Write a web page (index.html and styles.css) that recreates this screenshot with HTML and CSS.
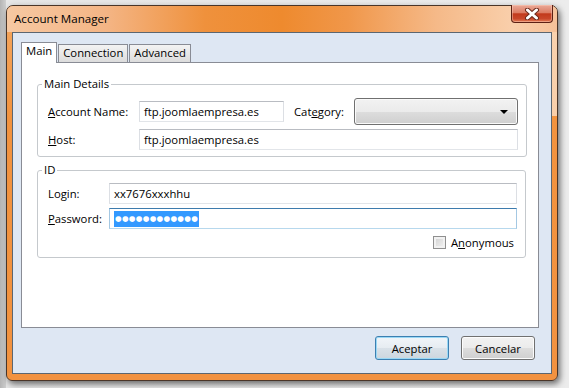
FILE: index.html
```html
<!DOCTYPE html>
<html lang="en">
<head>
    <meta charset="UTF-8">
    <title>Account Manager</title>
    <link rel="stylesheet" href="styles.css">
</head>
<body>
    <div class="desktop">
        <!-- Dialog window -->
        <div class="window">
            <div class="titlebar">
                <span class="title">Account Manager</span>
                <div class="close-btn">
                    <svg width="18" height="12" viewBox="0 0 18 12">
                        <path d="M4.5 2 L13.5 10 M13.5 2 L4.5 10" stroke="#6a2a1c" stroke-width="5" stroke-linecap="round"/>
                        <path d="M4.5 2 L13.5 10 M13.5 2 L4.5 10" stroke="#ffffff" stroke-width="3" stroke-linecap="round"/>
                    </svg>
                </div>
            </div>

            <div class="client">
                <!-- Tabs -->
                <div class="tabs">
                    <div class="tab active">Main</div>
                    <div class="tab">Connection</div>
                    <div class="tab">Advanced</div>
                </div>

                <div class="panel">
                    <fieldset class="group">
                        <legend>Main Details</legend>
                        <div class="rows rows-main">
                            <div class="row row-tall">
                                <span class="lbl lbl-wide"><u>A</u>ccount Name:</span>
                                <div class="field field-account">ftp.joomlaempresa.es</div>
                                <span class="lbl lbl-category">Cat<u>e</u>gory:</span>
                                <div class="combo"><span class="arrow"></span></div>
                            </div>
                            <div class="row">
                                <span class="lbl lbl-wide"><u>H</u>ost:</span>
                                <div class="field field-grow">ftp.joomlaempresa.es</div>
                            </div>
                        </div>
                    </fieldset>

                    <fieldset class="group group-id">
                        <legend>ID</legend>
                        <div class="rows rows-id">
                            <div class="row">
                                <span class="lbl lbl-narrow">Login:</span>
                                <div class="field field-grow">xx7676xxxhhu</div>
                            </div>
                            <div class="row">
                                <span class="lbl lbl-narrow"><u>P</u>assword:</span>
                                <div class="field field-grow field-focus"><span class="selection">●●●●●●●●●●●●</span></div>
                            </div>
                            <div class="row row-check">
                                <span class="checkbox"></span>
                                <span class="check-label">A<u>n</u>onymous</span>
                            </div>
                        </div>
                    </fieldset>
                </div>

                <!-- Dialog buttons -->
                <div class="buttons">
                    <button class="btn btn-default">Aceptar</button>
                    <button class="btn">Cancelar</button>
                </div>
            </div>
        </div>
    </div>
</body>
</html>
```

FILE: styles.css
```css
/* Reset */
* {
    margin: 0;
    padding: 0;
    box-sizing: border-box;
}

body {
    width: 569px;
    height: 388px;
    overflow: hidden;
    font-family: "Open Sans", "Noto Sans", sans-serif;
    font-size: 11.3px;
    color: #000;
}

/* Desktop behind the dialog */
.desktop {
    width: 569px;
    height: 388px;
    padding: 5px 0 0 6px;
    background:
        linear-gradient(90deg, #b4b4b4 0, #cfcfcf 6px, #e6e6e6 6px, #ececec 100%);
}

/* Window frame */
.window {
    width: 552px;
    height: 376px;
    border: 1px solid #4a3528;
    border-radius: 7px 7px 6px 6px;
    background:
        linear-gradient(90deg, transparent 0, transparent 540px, rgba(250, 214, 182, 0.9) 540px),
        linear-gradient(180deg, #f4a862 0%, #f2933f 30%, #f29240 100%);
    background-size: 100% 110px, 100% 100%;
    background-repeat: no-repeat;
    box-shadow: 2px 3px 6px rgba(0, 0, 0, 0.55);
    padding: 0 5px 6px 5px;
    display: flex;
    flex-direction: column;
}

.titlebar {
    height: 26px;
    margin: 0 -5px;
    display: flex;
    justify-content: space-between;
    align-items: flex-start;
    border-radius: 6px 6px 0 0;
    background: linear-gradient(90deg, #f6c8a2 0%, #f4b585 18%, #ef913c 36%, #ee8a2e 50%, #f0974a 62%, #f5b988 78%, #f9cfab 92%, #f6c199 100%);
}

.title {
    padding: 5px 0 0 7px;
    line-height: 16px;
    font-size: 11.6px;
}

.close-btn {
    width: 42px;
    height: 18px;
    margin: -1px 4px 0 0;
    border: 1px solid #5b2014;
    border-top: none;
    border-radius: 0 0 4px 4px;
    background: linear-gradient(180deg, #eaa998 0%, #dc7d64 45%, #c23a1c 52%, #c9472a 80%, #e27d57 100%);
    box-shadow: inset 0 0 0 1px rgba(255, 210, 190, 0.45);
    display: flex;
    justify-content: center;
    align-items: center;
}

/* Client area */
.client {
    flex: 1;
    border: 1px solid #5c6670;
    background: #dee7f3;
    display: flex;
    flex-direction: column;
}

.tabs {
    display: flex;
    align-items: flex-end;
    margin: 9px 0 0 8px;
    height: 20px;
}

.tab {
    height: 18px;
    padding: 0 4px;
    line-height: 15px;
    border: 1px solid #898c95;
    border-bottom: none;
    background: linear-gradient(180deg, #f3f3f3 0%, #e8e8e8 50%, #dcdcdc 100%);
}

.tab + .tab {
    margin-left: 1px;
}

.tab.active {
    height: 21px;
    margin-bottom: -1px;
    background: #fff;
    position: relative;
    z-index: 1;
}

.panel {
    height: 266px;
    margin: 0 12px 0 8px;
    border: 1px solid #898c95;
    background: #fff;
    padding: 13px 12px 0 15px;
}

/* Group boxes */
.group {
    border: 1px solid #c5c9cd;
    border-radius: 3px;
    padding: 0;
}

.group legend {
    margin-left: 4px;
    padding: 0 2px;
    line-height: 16px;
}

.group-id {
    margin-top: 5px;
}

.rows {
    padding: 6px 8px 6px 10px;
}

.rows-id {
    padding-top: 5px;
    padding-bottom: 7px;
}

.row {
    display: flex;
    align-items: center;
}

.row + .row {
    margin-top: 4px;
}

.row-tall {
    height: 27px;
}

.row-check {
    margin-top: 5px !important;
    height: 16px;
    justify-content: flex-end;
}

.lbl {
    flex: none;
}

.lbl-wide {
    width: 91px;
}

.lbl-narrow {
    width: 61px;
}

.lbl-category {
    width: 60px;
    margin-left: 10px;
}

.field {
    height: 21px;
    padding-left: 4px;
    line-height: 19px;
    border: 1px solid;
    border-color: #b9bcc2 #dcdfe4 #e2e5e9 #dcdfe4;
    background: #fff;
    white-space: nowrap;
    overflow: hidden;
}

.field-account {
    width: 145px;
}

.field-grow {
    flex: 1;
}

.field-focus {
    border-color: #3d7bad #a4c8e3 #b7d8ed #a4c8e3;
    display: flex;
    align-items: center;
}

.selection {
    height: 16px;
    padding: 0 1px;
    background: #3399ff;
    color: #fff;
    font-family: "DejaVu Sans", sans-serif;
    font-size: 7.6px;
    line-height: 16px;
    letter-spacing: 0.3px;
}

.combo {
    width: 164px;
    height: 27px;
    border: 1px solid #707070;
    border-radius: 3px;
    background: linear-gradient(180deg, #f2f2f2 0%, #ebebeb 50%, #dddddd 51%, #cfcfcf 100%);
    box-shadow: inset 0 0 0 1px #fafafa;
    display: flex;
    justify-content: flex-end;
    align-items: center;
    padding-right: 9px;
}

.arrow {
    width: 0;
    height: 0;
    border-left: 4px solid transparent;
    border-right: 4px solid transparent;
    border-top: 4px solid #000;
}

.checkbox {
    width: 13px;
    height: 13px;
    border: 1px solid #8f8f8f;
    background: linear-gradient(135deg, #cfcfcf 0%, #f4f4f4 100%);
    box-shadow: inset 0 0 0 2px #f1f1f1;
}

.check-label {
    margin: 0 3px 0 5px;
}

/* Bottom buttons */
.buttons {
    display: flex;
    justify-content: flex-end;
    gap: 12px;
    margin-top: 8px;
    padding-right: 16px;
}

.btn {
    width: 74px;
    height: 24px;
    font-family: inherit;
    font-size: inherit;
    color: #000;
    border: 1px solid #707070;
    border-radius: 3px;
    background: linear-gradient(180deg, #f2f2f2 0%, #ebebeb 50%, #dddddd 51%, #cfcfcf 100%);
    box-shadow: inset 0 0 0 1px #fcfcfc;
}

.btn-default {
    border-color: #3c7fb1;
    background: linear-gradient(180deg, #f1f5f9 0%, #e6ecf1 50%, #d9e1e8 51%, #cdd6de 100%);
    box-shadow: inset 0 0 0 1px #9ad8f5;
}
```
